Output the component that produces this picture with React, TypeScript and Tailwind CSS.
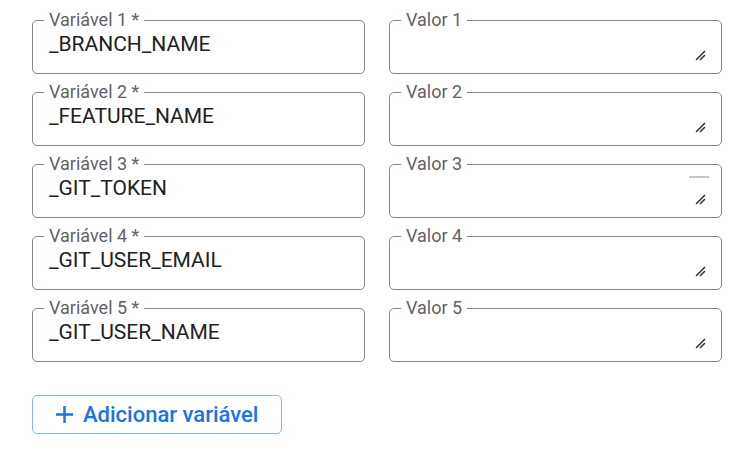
import React from 'react';

const rows = [
  { name: '_BRANCH_NAME', extra: false },
  { name: '_FEATURE_NAME', extra: false },
  { name: '_GIT_TOKEN', extra: true },
  { name: '_GIT_USER_EMAIL', extra: false },
  { name: '_GIT_USER_NAME', extra: false },
];

function ResizeHandle() {
  return (
    <svg width="11" height="11" viewBox="0 0 11 11" className="shrink-0">
      <path d="M1.5 9.5 L9.5 1.5 M5.5 9.5 L9.5 5.5" stroke="#3c4043" strokeWidth="1.7" strokeLinecap="round" />
    </svg>
  );
}

export default function App() {
  return (
    <div className="w-[737px] h-[455px] bg-white pl-[32px] pr-[15px] pt-[10px]" style={{ fontFamily: 'Roboto, "Liberation Sans", sans-serif' }}>
      <div className="grid grid-cols-2 gap-x-6 gap-y-[8px]">
        {rows.map((r, i) => (
          <React.Fragment key={i}>
            <fieldset className="h-[64px] border border-[#80868b] rounded-[5px] pl-[11px] pr-3 flex flex-col">
              <legend className="px-[5px] text-[18px] leading-[20px] text-[#5f6368]">Variável {i + 1} *</legend>
              <div className="pl-[5px] mt-[2px] text-[21px] leading-[24px] text-[#202124]">{r.name}</div>
            </fieldset>
            <fieldset className="h-[64px] border border-[#80868b] rounded-[5px] pl-[11px] pr-[15px] flex flex-col">
              <legend className="px-[5px] text-[18px] leading-[20px] text-[#5f6368]">Valor {i + 1}</legend>
              <div className="flex-1 flex flex-col items-end justify-between pb-[12px]">
                {r.extra ? <div className="w-[20px] h-[2px] bg-[#c4c7c5] mt-[2px] -mr-[3px]" /> : <div />}
                <ResizeHandle />
              </div>
            </fieldset>
          </React.Fragment>
        ))}
      </div>
      <button className="mt-[33px] w-[250px] h-[39px] border border-[#8ab4f8] rounded-[5px] flex items-center pl-[22px] gap-[9px] text-[#1a73e8] text-[22px] font-medium">
        <svg width="19" height="19" viewBox="0 0 20 20">
          <path d="M10 1 V19 M1 10 H19" stroke="#1a73e8" strokeWidth="2.6" />
        </svg>
        Adicionar variável
      </button>
    </div>
  );
}
